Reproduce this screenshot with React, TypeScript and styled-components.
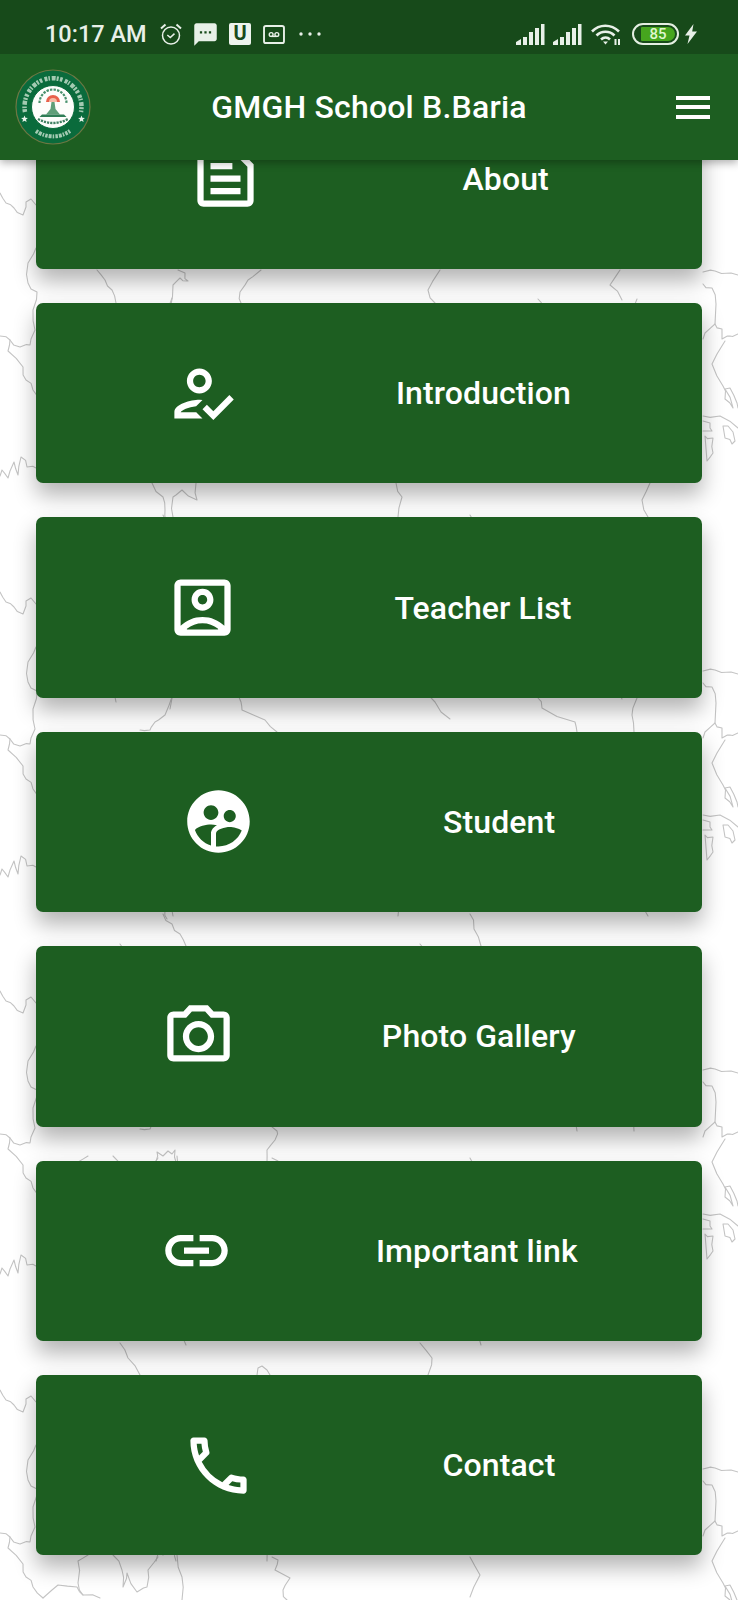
import React from "react";
import styled, { createGlobalStyle } from "styled-components";
import {
  MdOutlineHowToReg,
  MdOutlineAccountBox,
  MdSupervisedUserCircle,
  MdOutlinePhotoCamera,
  MdOutlineLink,
  MdOutlineCall,
  MdSms,
} from "react-icons/md";

const Global = createGlobalStyle`
  html, body { margin: 0; padding: 0; background: #fff; }
  body { font-family: Roboto, "Liberation Sans", sans-serif; }
`;

const Page = styled.div`
  position: relative;
  width: 738px;
  height: 1600px;
  overflow: hidden;
  background: #fff;
`;

const MapLayer = styled.svg`
  position: absolute;
  inset: 0;
  width: 738px;
  height: 1600px;
`;

const Header = styled.header`
  position: absolute;
  top: 0;
  left: 0;
  right: 0;
  z-index: 2;
  box-shadow: 0 3px 8px rgba(0, 0, 0, 0.3);
`;

const StatusBar = styled.div`
  height: 54px;
  box-sizing: border-box;
  background: #174a1a;
  display: flex;
  align-items: center;
  padding: 14px 40px 0 45px;
  color: #e8f0e8;
`;

const Clock = styled.span`
  font-size: 23.5px;
  font-weight: 500;
  width: 114px;
  flex: none;
`;

const NotifyIcons = styled.div`
  display: flex;
  align-items: center;
  gap: 11px;
  flex: 1;
`;

const SmsIcon = styled(MdSms)`
  margin: 0 -2px;
`;

const UBadge = styled.span`
  width: 22px;
  height: 22px;
  border-radius: 2px;
  background: #eef4ee;
  color: #174a1a;
  font-size: 20px;
  font-weight: 700;
  line-height: 21px;
  text-align: center;
  margin: 0 1px 0 1px;
`;

const SysIcons = styled.div`
  display: flex;
  align-items: center;
`;

const SignalGap = styled.span<{ $w: number }>`
  width: ${(p) => p.$w}px;
`;

const Battery = styled.div`
  width: 47px;
  height: 22px;
  box-sizing: border-box;
  border: 2px solid #e4efe2;
  border-radius: 11px;
  padding: 2px 2px 2px 7px;
  display: flex;
  margin: 0 5px 0 11px;
`;

const BatteryFill = styled.div`
  flex: 1;
  background: #46a51e;
  border-radius: 1px 7px 7px 1px;
  color: #dff7cf;
  font-size: 15px;
  font-weight: 500;
  line-height: 14px;
  text-align: center;
`;

const AppBar = styled.div`
  height: 106px;
  background: #1d5e21;
  display: flex;
  align-items: center;
  padding: 0 28px 0 15px;
`;

const Title = styled.h1`
  flex: 1;
  margin: 0;
  padding-right: 29px;
  text-align: center;
  color: #fff;
  font-size: 32px;
  font-weight: 500;
  letter-spacing: 0.2px;
`;

const Burger = styled.div`
  width: 34px;
  display: flex;
  flex-direction: column;
  gap: 5.5px;
`;

const BurgerBar = styled.span`
  height: 4px;
  background: #fff;
`;

const Menu = styled.main`
  position: relative;
  z-index: 1;
  display: flex;
  flex-direction: column;
  gap: 34px;
  padding: 88.6px 36px 0;
`;

const Card = styled.a`
  height: 180.4px;
  flex: none;
  box-sizing: border-box;
  padding: 0 54px 0 51px;
  background: #1d5e21;
  border-radius: 7px;
  box-shadow: 0 12px 22px rgba(0, 0, 0, 0.3);
  display: flex;
  align-items: center;
  justify-content: space-around;
  color: #fff;
`;

const IconBox = styled.span`
  width: 78px;
  height: 76px;
  display: flex;
  align-items: center;
  justify-content: center;
  flex: none;
`;

const Label = styled.span`
  font-size: 32px;
  font-weight: 500;
  letter-spacing: 0.1px;
`;

const AboutIcon = () => (
  <svg width="75" height="75" viewBox="0 0 24 24" fill="#fff">
    <path
      fillRule="evenodd"
      d="M5 3h11.600L21 7.400V19c0 1.100-.9 2-2 2H5c-1.100 0-2-.9-2-2V5c0-1.100.9-2 2-2zm0 2v14h14V8.200L15.800 5H5zm2.200 2h7v2h-7V7zm0 4h9.600v2H7.200v-2zm0 4h9.600v2H7.200v-2z"
    />
  </svg>
);

const AlarmIcon = () => (
  <svg width="24" height="24" viewBox="0 0 24 24" fill="none" stroke="#e8f0e8" strokeWidth="1.500">
    <circle cx="12" cy="13.500" r="8.500" />
    <path d="M8.300 13l3 2.600 4.200-4" />
    <path d="M2 6.500L6.500 2.500M22 6.500L17.500 2.500" strokeWidth="2" />
  </svg>
);

const TapeIcon = () => (
  <svg width="22" height="19" viewBox="0 0 23 20" fill="none" stroke="#e8f0e8">
    <rect x="1" y="1" width="21" height="18" rx="2" strokeWidth="2" />
    <circle cx="8.500" cy="10" r="2" strokeWidth="1.500" />
    <circle cx="14.500" cy="10" r="2" strokeWidth="1.500" />
    <path d="M8.500 12h6" strokeWidth="1.500" />
  </svg>
);

const DotsIcon = () => (
  <svg width="26" height="6" viewBox="0 0 26 6" fill="#e8f0e8">
    <circle cx="5" cy="3" r="1.700" />
    <circle cx="14" cy="3" r="1.700" />
    <circle cx="23" cy="3" r="1.700" />
  </svg>
);

const SignalIcon = () => (
  <svg width="29" height="21" viewBox="0 0 29 21" fill="#e8f0e8">
    <path d="M0 21v-3l5-3v6zM7 21v-8h4v8zM13 21V8h4v13zM19 21V4h4v17zM25 21V0h3.500v21z" />
  </svg>
);

const WifiIcon = () => (
  <svg width="30" height="22" viewBox="0 0 30 22" fill="none" stroke="#e8f0e8" strokeWidth="2.600">
    <path d="M1 8.500C8.500 .8 20 .8 28 8.500" />
    <path d="M5.500 12.500C10.500 7.500 18.500 7.500 23.500 12.500" />
    <path d="M10 16.500c2.700-2.500 6.500-2.500 9 0" />
    <path d="M12 18.500l2.500 3 2.500-3z" fill="#e8f0e8" stroke="none" />
    <path d="M24.500 16v6M28 16v6" strokeWidth="2" />
  </svg>
);

const BoltIcon = () => (
  <svg width="14" height="20" viewBox="0 0 14 20" fill="#e8f0e8">
    <path d="M9.500 0L1 11.500h4.500L3.500 20 13 7.500H8.200z" />
  </svg>
);

const Logo = () => (
  <svg width="76" height="76" viewBox="0 0 76 76">
    <circle cx="38" cy="38" r="37" fill="#0a6b3c" stroke="#6d7743" strokeWidth="1.200" />
    <path
      d="M10 43A28.500 28.500 0 1 1 66 43"
      fill="none"
      stroke="#d7ead9"
      strokeWidth="4.500"
      strokeDasharray="3 1 1.500 1.800 4 1 2 1.400 2.600 2.400"
      opacity="0.75"
    />
    <path
      d="M21 62A29.500 29.500 0 0 0 55 62"
      fill="none"
      stroke="#d7ead9"
      strokeWidth="4"
      strokeDasharray="2.500 1 3 1 1.500 1.200"
      opacity="0.75"
    />
    <circle cx="38" cy="38" r="21.500" fill="#fdfdfb" stroke="#0a6b3c" strokeWidth="1" />
    <path d="M24.500 34a13.500 13.500 0 0 1 27 0" fill="none" stroke="#0a6b3c" strokeWidth="2.200" strokeDasharray="2.400 1.200" opacity="0.75" />
    <path d="M31 33a7 7 0 0 1 14 0z" fill="#e8604c" />
    <path d="M34 33a4 4 0 0 1 8 0z" fill="#f7b9a5" />
    <path d="M36.500 33h3l1 7 4.500 5.500H31l4.500-5.500z" fill="#5f9e78" />
    <path d="M27 45.500h22l2.500 2.500h-27z" fill="#2f7d55" />
    <path d="M23 50q15 8 30 0" fill="none" stroke="#1f6a47" strokeWidth="2.400" strokeDasharray="2.200 1" opacity="0.85" />
    <path d="M9.500 46.500l.9 2.300 2.500.2-1.900 1.600.6 2.400-2.100-1.300-2.100 1.300.6-2.400L6.100 49l2.500-.2zM66.500 46.500l.9 2.300 2.500.2-1.900 1.600.6 2.400-2.100-1.300-2.100 1.300.6-2.400-1.900-1.600 2.500-.2z" fill="#e8f3ea" />
  </svg>
);

const MAP_PATHS = [
  "M0 193L6 203L14 208L23 215L26 202L31 199L36 205",
  "M36 248L28 263L28 283L37 292L33 310L35 330L30 345L20 347L10 340L0 336",
  "M10 340L8 351L23 367L26 380L33 390L43 401",
  "M36 468L27 467L21 457L18 475L14 462L8 478L2 470L0 476",
  "M97 270L105 280L112 290L116 303",
  "M170 310L173 285L180 278L188 281L185 273L178 270",
  "M261 270L248 280L240 292L241 303L242 311L265 321L277 333L275 342L267 352L267 364",
  "M172 298L165 316L155 323L150 331L140 331",
  "M538 299L542 309L575 323L577 333",
  "M637 299L632 316L634 333",
  "M156 364L157 354L163 358L168 353L172 356L175 352L176 364",
  "M88 358L78 364L78 386L83 398L100 401",
  "M113 358L122 373L123 390L127 376L137 395L147 390L148 373L158 360",
  "M177 358L182 380L182 403",
  "M272 360L278 363L275 373L290 381L283 393L287 403",
  "M43 401L58 388L77 390L83 398",
  "M152 483L163 497L165 510L167 520",
  "M173 517L173 497L182 490L197 500L196 483",
  "M396 483L402 497L398 517",
  "M650 483L642 500L648 517",
  "M163 515L172 525L180 535L186 547",
  "M470 515L474 530L481 547",
  "M257 577L258 570L262 568L267 572L270 577",
  "M420 545L432 560L428 577",
  "M120 545L128 560L140 577",
  "M440 270L428 290L435 303L450 320",
  "M620 270L610 285L622 300",
  "M470 360L480 378L470 400",
  "M703 272L715 271L731 273L738 275",
  "M703 284L712 288L716 304L715 324L705 333L703 339",
  "M715 324L722 329L722 339L730 336L738 334",
  "M725 341L712 364L723 386L725 399L733 408L725 389L730 388L737 403L738 408",
  "M703 416L720 416L738 428",
  "M703 421L710 423L712 431L703 431",
  "M705 436L713 438L713 453L707 461Z",
  "M723 426L728 426L735 441L732 444L725 438Z",
];

// Splits each border segment and nudges the midpoints so the lines read as hand-traced coastlines.
function roughen(d: string): string {
  const closed = d.endsWith("Z");
  const pts = d
    .replace(/[MZ]/g, "")
    .split("L")
    .map((p) => p.trim().split(" ").map(Number));
  let out = `M${pts[0][0]} ${pts[0][1]}`;
  for (let i = 1; i < pts.length; i++) {
    const [ax, ay] = pts[i - 1];
    const [bx, by] = pts[i];
    const len = Math.hypot(bx - ax, by - ay);
    if (len > 8) {
      const nudge = Math.sin(ax * 12.9 + by * 78.2) * 1.6;
      out += `L${((ax + bx) / 2 + nudge).toFixed(1)} ${((ay + by) / 2 - nudge).toFixed(1)}`;
    }
    out += `L${bx} ${by}`;
  }
  return closed ? `${out}Z` : out;
}

const MapBackdrop = () => (
  <MapLayer viewBox="0 0 738 1600">
    <defs>
      <pattern id="map" patternUnits="userSpaceOnUse" x="0" y="180" width="738" height="399">
        <g
          transform="translate(0 -180)"
          fill="none"
          stroke="#c4c4c4"
          strokeWidth="1.100"
          strokeLinejoin="round"
          strokeLinecap="round"
        >
          {MAP_PATHS.map((d) => (
            <path key={d} d={roughen(d)} />
          ))}
        </g>
      </pattern>
    </defs>
    <rect width="738" height="1600" fill="url(#map)" />
  </MapLayer>
);

const ITEMS = [
  { label: "About", icon: <AboutIcon /> },
  { label: "Introduction", icon: <MdOutlineHowToReg size={75} /> },
  { label: "Teacher List", icon: <MdOutlineAccountBox size={75} /> },
  { label: "Student", icon: <MdSupervisedUserCircle size={75} /> },
  { label: "Photo Gallery", icon: <MdOutlinePhotoCamera size={75} /> },
  { label: "Important link", icon: <MdOutlineLink size={75} /> },
  { label: "Contact", icon: <MdOutlineCall size={75} /> },
];

export default function App() {
  return (
    <Page>
      <Global />
      <MapBackdrop />
      <Menu>
        {ITEMS.map((item) => (
          <Card key={item.label}>
            <IconBox>{item.icon}</IconBox>
            <Label>{item.label}</Label>
          </Card>
        ))}
      </Menu>
      <Header>
        <StatusBar>
          <Clock>10:17 AM</Clock>
          <NotifyIcons>
            <AlarmIcon />
            <SmsIcon size={27} color="#e8f0e8" />
            <UBadge>U</UBadge>
            <TapeIcon />
            <DotsIcon />
          </NotifyIcons>
          <SysIcons>
            <SignalIcon />
            <SignalGap $w={8} />
            <SignalIcon />
            <SignalGap $w={9} />
            <WifiIcon />
            <Battery>
              <BatteryFill>85</BatteryFill>
            </Battery>
            <BoltIcon />
          </SysIcons>
        </StatusBar>
        <AppBar>
          <Logo />
          <Title>GMGH School B.Baria</Title>
          <Burger>
            <BurgerBar />
            <BurgerBar />
            <BurgerBar />
          </Burger>
        </AppBar>
      </Header>
    </Page>
  );
}
